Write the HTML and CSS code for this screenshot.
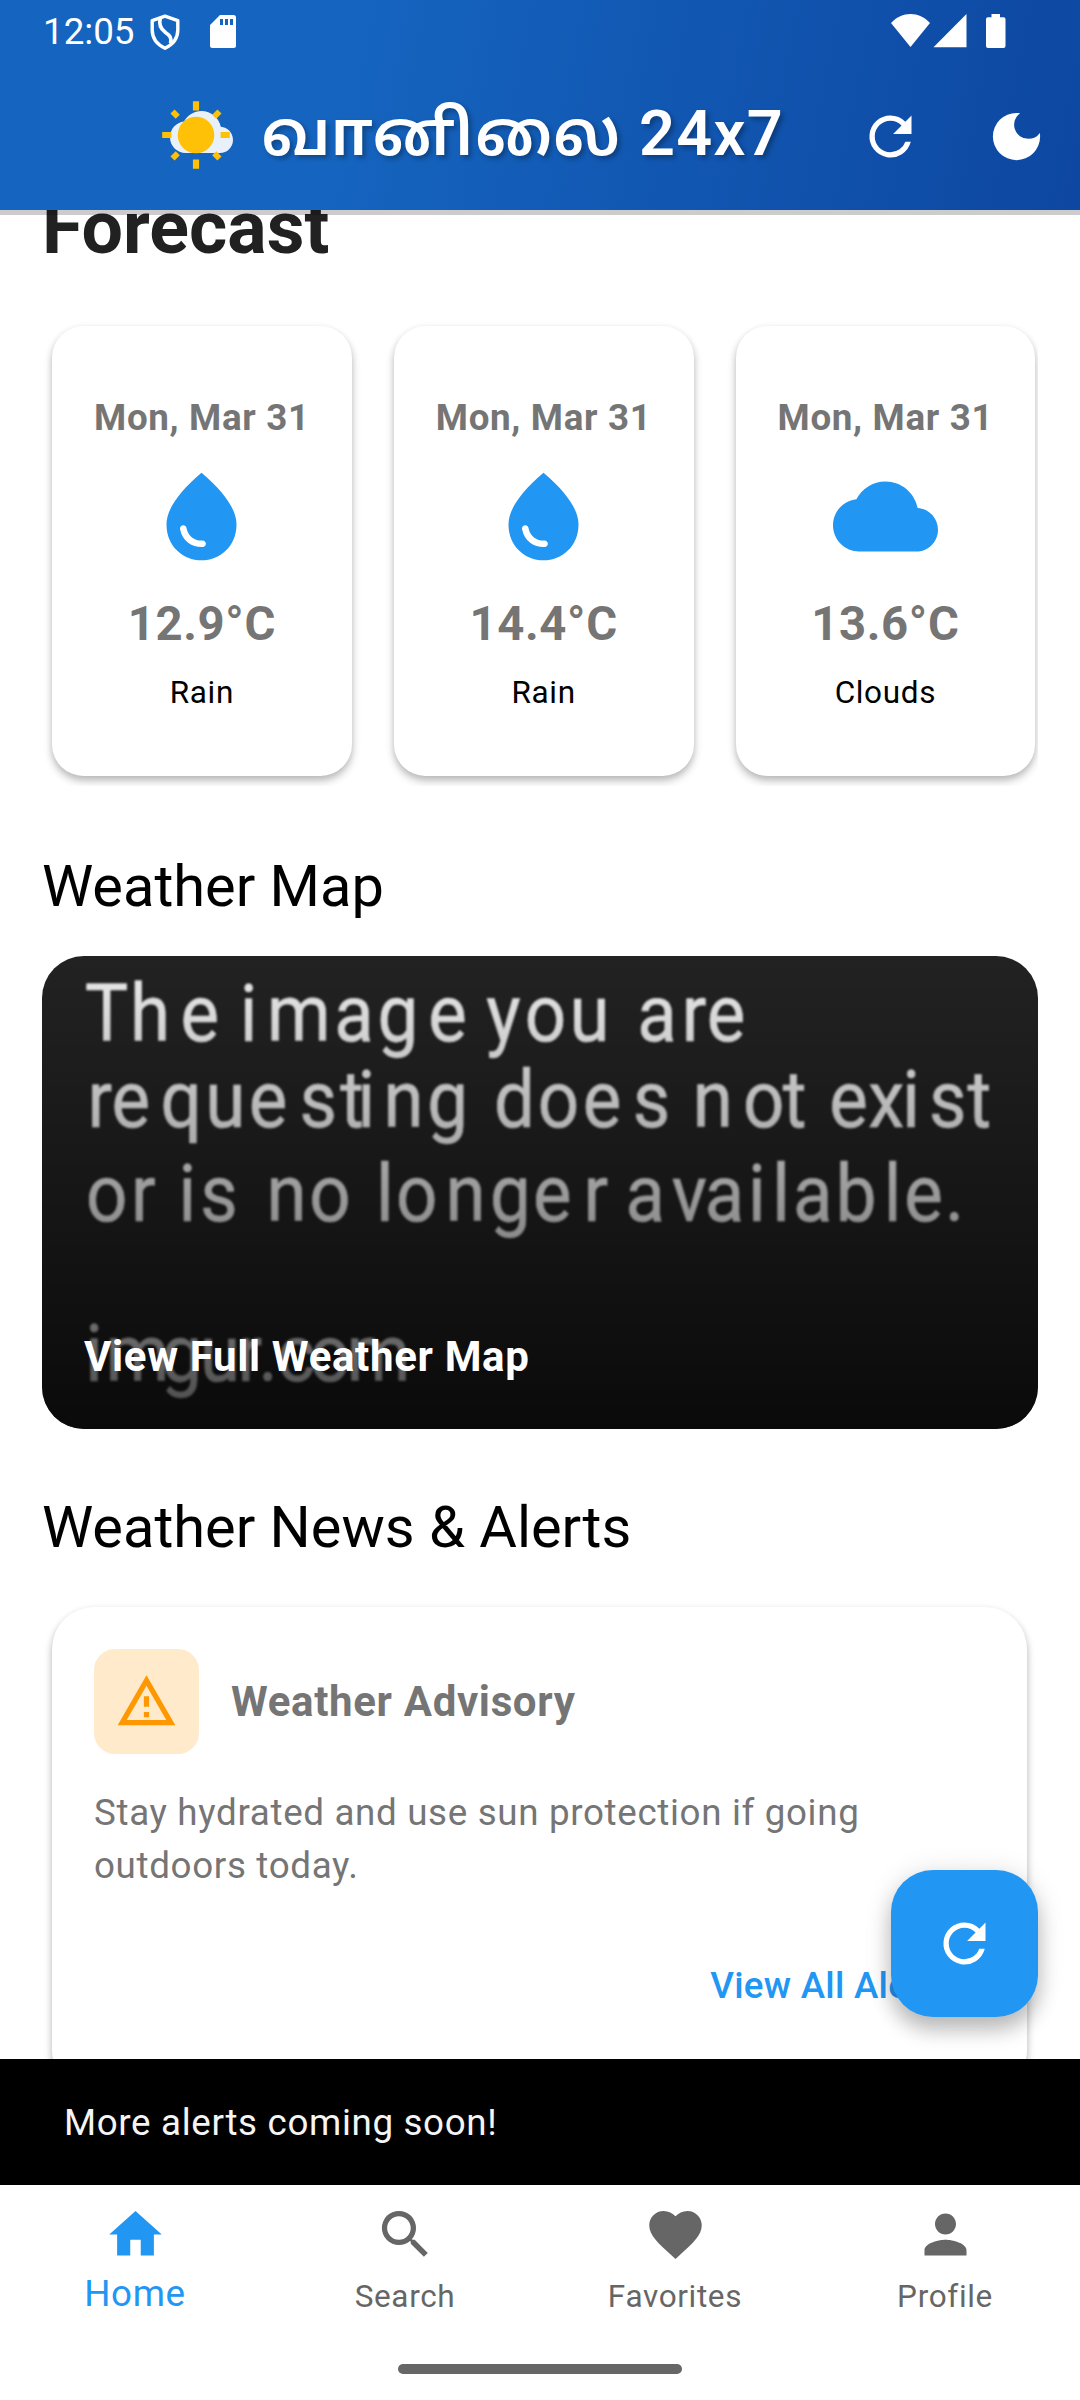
FILE: index.html
```html
<!DOCTYPE html>
<html lang="ta">
<head>
<meta charset="utf-8">
<title>வானிலை 24x7</title>
<link rel="stylesheet" href="styles.css">
</head>
<body>
<svg class="defs" width="0" height="0" aria-hidden="true">
  <symbol id="refresh" viewBox="0 0 24 24"><path d="M17.65 6.35A7.958 7.958 0 0 0 12 4a8 8 0 1 0 7.73 10h-2.08A5.99 5.99 0 0 1 12 18c-3.31 0-6-2.69-6-6s2.69-6 6-6c1.66 0 3.14.69 4.22 1.78L13 11h7V4l-2.35 2.35z"/></symbol>
  <symbol id="drop" viewBox="0 0 24 24"><path d="M12 2c-5.33 4.55-8 8.48-8 11.8 0 4.98 3.8 8.2 8 8.2s8-3.22 8-8.2c0-3.32-2.67-7.25-8-11.8zM7.83 14c.37 0 .67.26.74.62.41 2.22 2.28 2.98 3.64 2.87.43-.02.79.32.79.75 0 .4-.32.73-.72.75-2.13.13-4.62-1.09-5.19-4.12-.08-.45.28-.87.74-.87z"/></symbol>
  <symbol id="cloud" viewBox="0 0 24 24"><path d="M19.35 10.04C18.67 6.59 15.64 4 12 4 9.11 4 6.6 5.64 5.35 8.04 2.34 8.36 0 10.91 0 14c0 3.31 2.69 6 6 6h13c2.76 0 5-2.24 5-5 0-2.64-2.05-4.78-4.65-4.96z"/></symbol>
</svg>
<div class="screen">
  <header class="appbar">
    <div class="status">
      <span class="clock">12:05</span>
      <svg class="shield" viewBox="0 0 30 36" width="30" height="36"><path d="M15 2.2 27.8 6.6V16c0 8.5-5.2 14.600-12.800 18.200C7.400 30.600 2.200 24.500 2.200 16V6.600Z" fill="none" stroke="#fff" stroke-width="3.4" stroke-linejoin="round"/><path d="M10.500 3.500C8.500 10 10 14.500 15.500 18.500 20 21.500 22 24 20.500 29.500" fill="none" stroke="#fff" stroke-width="3.6"/></svg>
      <svg class="sd" viewBox="0 0 26 33" width="26" height="33"><path fill="#fff" fill-rule="evenodd" d="M10 0H23.500a2.500 2.500 0 0 1 2.500 2.500V30.500a2.500 2.500 0 0 1-2.500 2.500H2.500A2.500 2.500 0 0 1 0 30.500V10ZM10 4v6h3V4Zm5 0v6h3V4Zm5 0v6h3V4Z"/></svg>
      <svg class="signals" viewBox="0 0 115 35" width="115" height="35" fill="#fff"><path d="M0 9C11-3 28-3 39 9L19.500 33Z"/><path d="M75.500 0V33.300H42.500Z"/><path d="M100.500 0h8.500v3.300h3.500a2 2 0 0 1 2 2V32a2 2 0 0 1-2 2H97a2 2 0 0 1-2-2V5.300a2 2 0 0 1 2-2h3.500Z"/></svg>
    </div>
    <div class="toolbar">
      <svg class="logo" viewBox="-35 -35 74 70" width="74" height="70">
        <use href="#cloud" x="-26" y="-34.500" width="63" height="63" fill="#e8f0fa"/>
        <g fill="#ffc107">
          <circle r="18.300"/>
          <path d="M-3.100-33.800h6.200v9.200h-6.200zM-3.100 24.600h6.200v9.200h-6.200zM-33.800-3.100h9.200v6.200h-9.200zM24.600-3.100h9.200v6.200h-9.200z"/>
          <path transform="rotate(45)" d="M-2.900-33.200h5.800v7.400h-5.800zM-2.900 25.800h5.800v7.400h-5.800zM-33.200-2.900h7.400v5.800h-7.400zM25.800-2.900h7.400v5.800h-7.400z"/>
        </g>
      </svg>
      <h1 class="title">வானிலை 24x7</h1>
      <svg class="icon action" width="63" height="63"><use href="#refresh"/></svg>
      <svg class="icon" viewBox="0 0 24 24" width="63" height="63"><path d="M12 3a9 9 0 1 0 9 9c0-.46-.04-.92-.1-1.360a5.389 5.389 0 0 1-4.400 2.260 5.403 5.403 0 0 1-3.140-9.800c-.44-.06-.9-.1-1.360-.1z"/></svg>
    </div>
  </header>

  <main class="content">
    <h2 class="forecast-title">Forecast</h2>
    <div class="forecast">
      <article class="day"><p class="date">Mon, Mar 31</p><svg width="105" height="105"><use href="#drop"/></svg><p class="temp">12.9°C</p><p class="cond">Rain</p></article>
      <article class="day"><p class="date">Mon, Mar 31</p><svg width="105" height="105"><use href="#drop"/></svg><p class="temp">14.4°C</p><p class="cond">Rain</p></article>
      <article class="day"><p class="date">Mon, Mar 31</p><svg width="105" height="105"><use href="#cloud"/></svg><p class="temp">13.6°C</p><p class="cond">Clouds</p></article>
    </div>

    <h2 class="section map-title">Weather Map</h2>
    <div class="map">
      <svg class="map-image" viewBox="0 0 996 472" width="996" height="472">
        <g transform="scale(.92 1)">
          <text y="85.500" x="70.4 117.5 171.4 200 224.6 279.2 339.1 387 440.9 470 501.6 547.2 595.1 630 668.5 708.9 743.4">The image you are</text>
          <text y="171.400" x="62.9 96.6 151.2 199.1 245.6 300.2 336.9 352.6 393 440.9 480 513.6 561.5 608.6 662.5 700 729.2 784.5 818.2 850 876.6 917.8 944.7 984.4 1018.9">requesting does not exist</text>
          <text y="264.700" x="70.4 110.1 130 158 192.4 230 265.8 312.9 340 372.8 407.3 460.4 509.1 554.7 601.9 630 655.8 703.7 741.9 777.1 803.3 837.7 884.9 924.5 958.2 991.9">or is no longer available.</text>
          <text y="425.300" x="56.5 103.8 151.8 193.5 226 245.700 276 313 366">imgur.com</text>
        </g>
      </svg>
      <div class="map-overlay"><span>View Full Weather Map</span></div>
    </div>

    <h2 class="section news-title">Weather News &amp; Alerts</h2>
    <article class="news">
      <div class="news-head">
        <div class="badge"><svg viewBox="0 0 24 24" width="63" height="63" fill="#ff9800"><path d="M12 5.990 19.530 19H4.470L12 5.990M12 2 1 21h22L12 2zm1 14h-2v2h2v-2zm0-6h-2v4h2v-4z"/></svg></div>
        <h3>Weather Advisory</h3>
      </div>
      <p class="news-body">Stay hydrated and use sun protection if going outdoors today.</p>
      <a class="news-link">View All Alerts</a>
    </article>
    <button class="fab" aria-label="Refresh"><svg class="icon" width="63" height="63"><use href="#refresh"/></svg></button>
  </main>

  <div class="snackbar">More alerts coming soon!</div>

  <nav class="nav">
    <div class="tabs">
      <a class="tab active"><svg viewBox="0 0 24 24"><path d="M10 20v-6h4v6h5v-8h3L12 3 2 12h3v8z"/></svg><span>Home</span></a>
      <a class="tab"><svg viewBox="0 0 24 24"><path d="M15.500 14h-.79l-.28-.27A6.471 6.471 0 0 0 16 9.500 6.500 6.500 0 1 0 9.500 16c1.610 0 3.090-.59 4.230-1.570l.27.28v.79l5 4.990L20.490 19l-4.990-5zm-6 0C7.010 14 5 11.990 5 9.500S7.010 5 9.500 5 14 7.010 14 9.500 11.990 14 9.500 14z"/></svg><span>Search</span></a>
      <a class="tab"><svg viewBox="0 0 24 24"><path d="M12 21.350l-1.450-1.320C5.400 15.360 2 12.280 2 8.500 2 5.420 4.420 3 7.500 3c1.740 0 3.410.81 4.500 2.090C13.090 3.810 14.760 3 16.500 3 19.580 3 22 5.420 22 8.500c0 3.780-3.400 6.860-8.550 11.540L12 21.350z"/></svg><span>Favorites</span></a>
      <a class="tab"><svg viewBox="0 0 24 24"><path d="M12 12c2.210 0 4-1.790 4-4s-1.790-4-4-4-4 1.790-4 4 1.790 4 4 4zm0 2c-2.670 0-8 1.340-8 4v2h16v-2c0-2.660-5.330-4-8-4z"/></svg><span>Profile</span></a>
    </div>
    <div class="handle"></div>
  </nav>
</div>
</body>
</html>
```
FILE: styles.css
```css
* { box-sizing: border-box; margin: 0; padding: 0; }
body {
  width: 1080px;
  height: 2400px;
  overflow: hidden;
  background: #fff;
  color: #000;
  font-family: Roboto, "Noto Sans Tamil", "Noto Sans", sans-serif;
}
svg { display: block; flex: none; }
.defs { position: absolute; }
.screen { display: flex; flex-direction: column; height: 2400px; }

/* App bar */
.appbar {
  position: relative;
  z-index: 2;
  flex: none;
  height: 210px;
  background: linear-gradient(101deg, #1565c0 30%, #0d47a1 100%);
  box-shadow: 0 5px rgba(0, 0, 0, .2);
  color: #fff;
}
.status { display: flex; align-items: flex-start; height: 63px; padding: 14px 74px 0 43px; }
.clock { width: 107px; margin-top: -4px; font-size: 36.75px; line-height: 43px; }
.sd { margin: 1px 0 0 30px; }
.signals { margin-left: auto; }
.toolbar { display: flex; align-items: center; height: 147px; padding: 0 32px 0 161px; }
.logo { margin-bottom: 4px; }
.title {
  flex: 1;
  margin: 0 0 6px 26px;
  font-size: 63px;
  font-weight: 600;
  line-height: 84px;
  letter-spacing: 1.3px;
  white-space: nowrap;
  text-shadow: 3px 3px 5px rgba(0, 0, 0, .3);
}
.icon { fill: #fff; }
.action { margin-right: 63px; }

/* Scrolled content */
.content { position: relative; flex: 1; min-height: 0; overflow: hidden; padding: 0 42px; }
.forecast-title { margin-top: -25px; font-size: 73.5px; line-height: 86px; color: #212121; }
.forecast {
  display: flex;
  gap: 42px;
  height: 473px;
  margin-top: 42px;
  padding: 13px 0 10px 10px;
  overflow: hidden;
}
.day {
  flex: none;
  display: flex;
  flex-direction: column;
  align-items: center;
  width: 299.75px;
  height: 450px;
  padding-top: 65px;
  border-radius: 31.5px;
  background: #fff;
  box-shadow: 0 5px 8px rgba(0, 0, 0, .24), 0 2px 6px rgba(0, 0, 0, .08);
}
.day svg { margin-top: 20px; fill: #2196f3; }
.date { font-size: 36.75px; font-weight: 700; line-height: 53px; letter-spacing: .656px; color: #757575; }
.temp { margin-top: 21px; font-size: 47.25px; font-weight: 700; line-height: 68px; letter-spacing: .656px; color: #757575; }
.cond { margin-top: 14px; font-size: 31.5px; line-height: 42px; letter-spacing: .656px; }
.section { font-size: 57.75px; font-weight: 400; line-height: 73.5px; }
.map-title { margin-top: 64px; }
.news-title { margin-top: 62.5px; }

/* Map preview */
.map {
  display: grid;
  height: 472.5px;
  margin-top: 32.5px;
  border-radius: 42px;
  overflow: hidden;
  background: #222;
}
.map > * { grid-area: 1 / 1; }
.map-image { fill: #eee; stroke: #eee; stroke-width: .6px; font-size: 79px; text-anchor: middle; filter: blur(1.3px); }
.map-overlay {
  display: flex;
  align-items: flex-end;
  z-index: 1;
  padding: 0 42px 42px;
  background: linear-gradient(transparent, rgba(0, 0, 0, .7));
}
.map-overlay span { font-size: 42px; font-weight: 700; line-height: 60px; letter-spacing: .656px; color: #fff; }

/* News */
.news {
  display: flex;
  flex-direction: column;
  width: 975px;
  height: 485px;
  margin: 42.5px 0 0 10px;
  padding: 42px;
  border-radius: 42px;
  background: #fff;
  box-shadow: 0 5px 8px rgba(0, 0, 0, .24), 0 2px 6px rgba(0, 0, 0, .08);
}
.news-head { display: flex; align-items: center; gap: 32px; }
.badge { display: grid; place-items: center; width: 105px; height: 105px; border-radius: 21px; background: #ffeacc; }
.news-head h3 { font-size: 42px; line-height: 60px; letter-spacing: .656px; color: #757575; }
.news-body { margin-top: 33px; font-size: 36.75px; line-height: 52.5px; letter-spacing: .656px; color: #757575; }
.news-link { align-self: flex-end; margin: 67.5px 31px 0 0; font-size: 36.75px; font-weight: 500; line-height: 52.5px; letter-spacing: .26px; color: #2196f3; }

.fab {
  position: absolute;
  right: 42px;
  bottom: 42px;
  display: grid;
  place-items: center;
  width: 147px;
  height: 147px;
  border: 0;
  border-radius: 42px;
  background: #2196f3;
  box-shadow: 0 14px 20px rgba(0, 0, 0, .22), 0 2px 28px rgba(0, 0, 0, .12);
}

.snackbar {
  flex: none;
  height: 126px;
  padding: 1px 0 0 64px;
  background: #000;
  color: #f5f5f5;
  font-size: 36.75px;
  line-height: 126px;
  letter-spacing: .656px;
}

/* Bottom navigation */
.nav { flex: none; display: flex; flex-direction: column; align-items: center; height: 215px; background: #fff; }
.tabs { display: flex; align-self: stretch; height: 179px; padding-top: 18px; }
.tab { flex: 1; display: flex; flex-direction: column; align-items: center; color: #666; fill: #666; }
.tab svg { width: 63px; height: 63px; }
.tab span { margin-top: 10px; font-size: 31.5px; line-height: 42px; letter-spacing: .656px; }
.tab.active { color: #2196f3; fill: #2196f3; }
.tab.active span { margin-top: 1px; font-size: 36.75px; line-height: 53px; }
.handle { width: 284px; height: 10px; border-radius: 5px; background: #666; }
```
